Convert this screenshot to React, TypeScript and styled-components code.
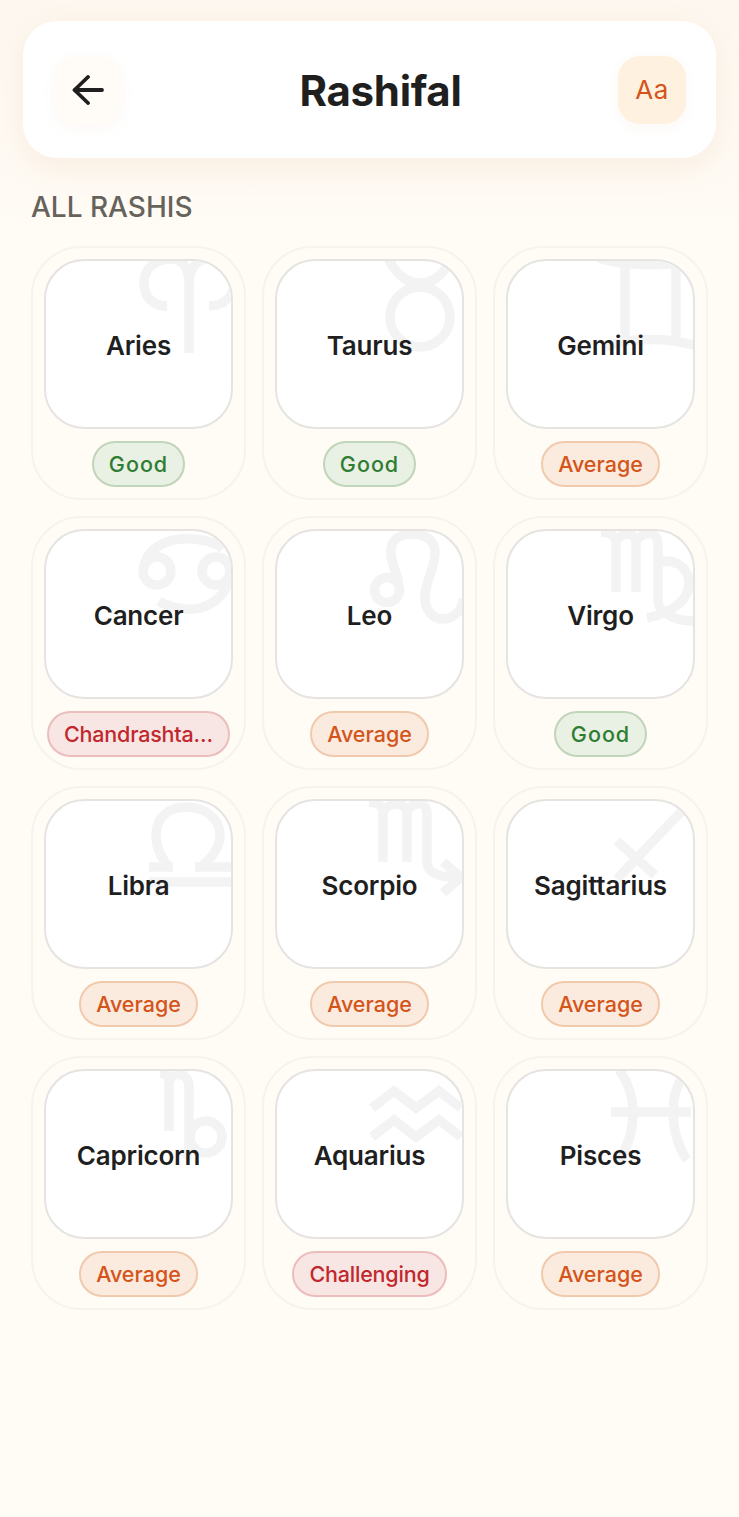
import React from 'react';
import styled, { createGlobalStyle } from 'styled-components';

const GlobalStyle = createGlobalStyle`
    html, body {
        margin: 0;
        padding: 0;
        background: #fffbf5;
    }
    * {
        box-sizing: border-box;
    }
`;

const Page = styled.div`
    width: 739px;
    min-height: 1517px;
    padding: 21px 23px 0;
    background: linear-gradient(#fdf7ef 0, #fffbf5 240px);
    font-family: Inter, 'Noto Sans', sans-serif;
    color: #1f1f1f;
`;

const Header = styled.header`
    height: 137px;
    padding: 0 30px 0 31px;
    display: flex;
    align-items: center;
    justify-content: space-between;
    background: #fff;
    border-radius: 34px;
    box-shadow: 0 10px 30px rgba(214, 160, 110, 0.12);
`;

const IconButton = styled.div<{ $accent?: boolean }>`
    width: 68px;
    height: 68px;
    display: flex;
    align-items: center;
    justify-content: center;
    border-radius: 22px;
    background: ${p => (p.$accent ? '#fff1df' : '#fffcf8')};
    color: ${p => (p.$accent ? '#d4541a' : '#1f1f1f')};
    box-shadow: 0 4px 14px rgba(214, 160, 110, 0.07);
    font-size: 26px;
    letter-spacing: 0.5px;
`;

const Title = styled.h1`
    margin: 0;
    padding: 3px 0 0 21px;
    font-size: 42px;
    line-height: 52px;
    font-weight: 700;
    letter-spacing: -0.3px;
`;

const SectionTitle = styled.h2`
    margin: 0;
    height: 88px;
    padding: 10px 0 0 8px;
    display: flex;
    align-items: center;
    font-size: 28px;
    font-weight: 500;
    color: #66625c;
`;

const Grid = styled.div`
    margin: 0 8px;
    display: grid;
    grid-template-columns: repeat(3, 215px);
    grid-auto-rows: 254px;
    gap: 16px;
`;

const Card = styled.div`
    display: flex;
    flex-direction: column;
    align-items: center;
    gap: 12px;
    padding: 11px;
    border: 2px solid #f6f3ee;
    border-radius: 50px;
`;

const Tile = styled.div`
    position: relative;
    flex: none;
    width: 100%;
    height: 170px;
    padding-top: 2px;
    display: flex;
    align-items: center;
    justify-content: center;
    overflow: hidden;
    background: #fff;
    border: 2px solid #e5e4e2;
    border-radius: 40px;
`;

const Glyph = styled.svg`
    position: absolute;
    top: -2px;
    right: -2px;
    width: 100px;
    height: 100px;
    fill: none;
    stroke: #f3f3f4;
    stroke-width: 9.5;
    overflow: visible;
`;

const Name = styled.span`
    position: relative;
    font-size: 26px;
    font-weight: 600;
    letter-spacing: -0.2px;
`;

const tones = {
    good: { bg: '#e9f0e4', border: '#c0d5b9', text: '#2e7d32', spacing: '1px' },
    average: { bg: '#fbebdf', border: '#f1caae', text: '#d4541a', spacing: '0' },
    bad: { bg: '#f8e6e4', border: '#ecbdbd', text: '#c1272d', spacing: '-0.2px' },
};

type Tone = keyof typeof tones;

const Badge = styled.div<{ $tone: Tone }>`
    height: 46px;
    padding: 0 15px;
    border: 2px solid ${p => tones[p.$tone].border};
    border-radius: 23px;
    background: ${p => tones[p.$tone].bg};
    color: ${p => tones[p.$tone].text};
    font-size: 21.5px;
    font-weight: 500;
    letter-spacing: ${p => tones[p.$tone].spacing};
    line-height: 43px;
    white-space: nowrap;
`;

// zodiac watermarks, 100 units = top right 100px of the tile
const glyphs: Record<string, React.ReactNode> = {
    Aries: <path d="M34 47C18 47 11 36 11 24C11 8 24 0 38 0C50 0 56 10 56 25V94M56 25C56 10 64 0 76 0C90 0 101 8 101 24C101 36 92 47 76 47" />,
    Taurus: (
        <>
            <circle cx="56" cy="58" r="30" />
            <path d="M22 -6C30 14 42 24 56 24C70 24 82 14 90 -6" />
        </>
    ),
    Gemini: <path d="M4 -1C30 8 80 8 105 -1M30 6V80M81 6V80M10 88C35 78 75 78 105 88" />,
    Cancer: (
        <>
            <circle cx="24" cy="42" r="14" />
            <circle cx="83" cy="42" r="14" />
            <path d="M11 38C14 16 40 8 60 10C72 11 84 14 90 20M97 46C94 70 72 82 52 80C42 79 32 76 26 72" />
        </>
    ),
    Leo: (
        <>
            <circle cx="23" cy="61" r="12.5" />
            <path d="M35 54C30 38 26 30 27 20C28 9 38 5 49 5C62 5 71 12 71 24C71 38 62 52 61 66C60 80 68 90 79 90C90 90 97 82 100 70" />
        </>
    ),
    Virgo: <path d="M6 3C14 3 21 6 21 14V63M21 14C21 6 40 -1 41 14V63M41 14C41 6 62 -2 63 14V72C63 80 75 92 98 92M63 34C78 28 94 38 94 54C94 72 76 84 52 89" />,
    Libra: <path d="M16 68H40M36 68C27 58 23 47 23 36C23 18 36 8 53 8C70 8 87 18 87 36C87 47 80 58 68 68M62 68H100M16 83H100" />,
    Scorpio: <path d="M5 3C13 3 19 6 19 14V63M19 14C19 6 42 -1 43 14V63M43 14C43 6 62 -2 63 14V62C63 72 70 78 92 78M79 63L97 78L79 94" />,
    Sagittarius: <path d="M22 80L100 -2M22 42L60 76" />,
    Capricorn: (
        <>
            <circle cx="73" cy="68" r="16" />
            <path d="M27 4C34 4 36 8 36 14V62M36 14C38 2 56 2 56 18V72C56 78 56 84 52 90" />
        </>
    ),
    Aquarius: <path d="M8 39L30 22L52 39L75 22L97 39M8 68L30 51L52 68L75 51L97 68" />,
    Pisces: <path d="M24 1C34 14 38 28 38 44C38 60 34 76 24 91M92 1C82 14 78 28 78 42C78 60 82 76 92 91M16 43H96" />,
};

const rashis: { name: string; status: string; tone: Tone }[] = [
    { name: 'Aries', status: 'Good', tone: 'good' },
    { name: 'Taurus', status: 'Good', tone: 'good' },
    { name: 'Gemini', status: 'Average', tone: 'average' },
    { name: 'Cancer', status: 'Chandrashta…', tone: 'bad' },
    { name: 'Leo', status: 'Average', tone: 'average' },
    { name: 'Virgo', status: 'Good', tone: 'good' },
    { name: 'Libra', status: 'Average', tone: 'average' },
    { name: 'Scorpio', status: 'Average', tone: 'average' },
    { name: 'Sagittarius', status: 'Average', tone: 'average' },
    { name: 'Capricorn', status: 'Average', tone: 'average' },
    { name: 'Aquarius', status: 'Challenging', tone: 'bad' },
    { name: 'Pisces', status: 'Average', tone: 'average' },
];

const BackArrow = () => (
    <svg width="32" height="30" viewBox="0 0 32 30" fill="none" stroke="currentColor" strokeWidth="3.8" strokeLinecap="round" strokeLinejoin="round">
        <path d="M30 15H2.5M16 2L2.5 15L16 28" />
    </svg>
);

export default function App() {
    return (
        <Page>
            <GlobalStyle />
            <Header>
                <IconButton>
                    <BackArrow />
                </IconButton>
                <Title>Rashifal</Title>
                <IconButton $accent>Aa</IconButton>
            </Header>
            <SectionTitle>ALL RASHIS</SectionTitle>
            <Grid>
                {rashis.map(({ name, status, tone }) => (
                    <Card key={name}>
                        <Tile>
                            <Glyph viewBox="0 0 100 100">{glyphs[name]}</Glyph>
                            <Name>{name}</Name>
                        </Tile>
                        <Badge $tone={tone}>{status}</Badge>
                    </Card>
                ))}
            </Grid>
        </Page>
    );
}
